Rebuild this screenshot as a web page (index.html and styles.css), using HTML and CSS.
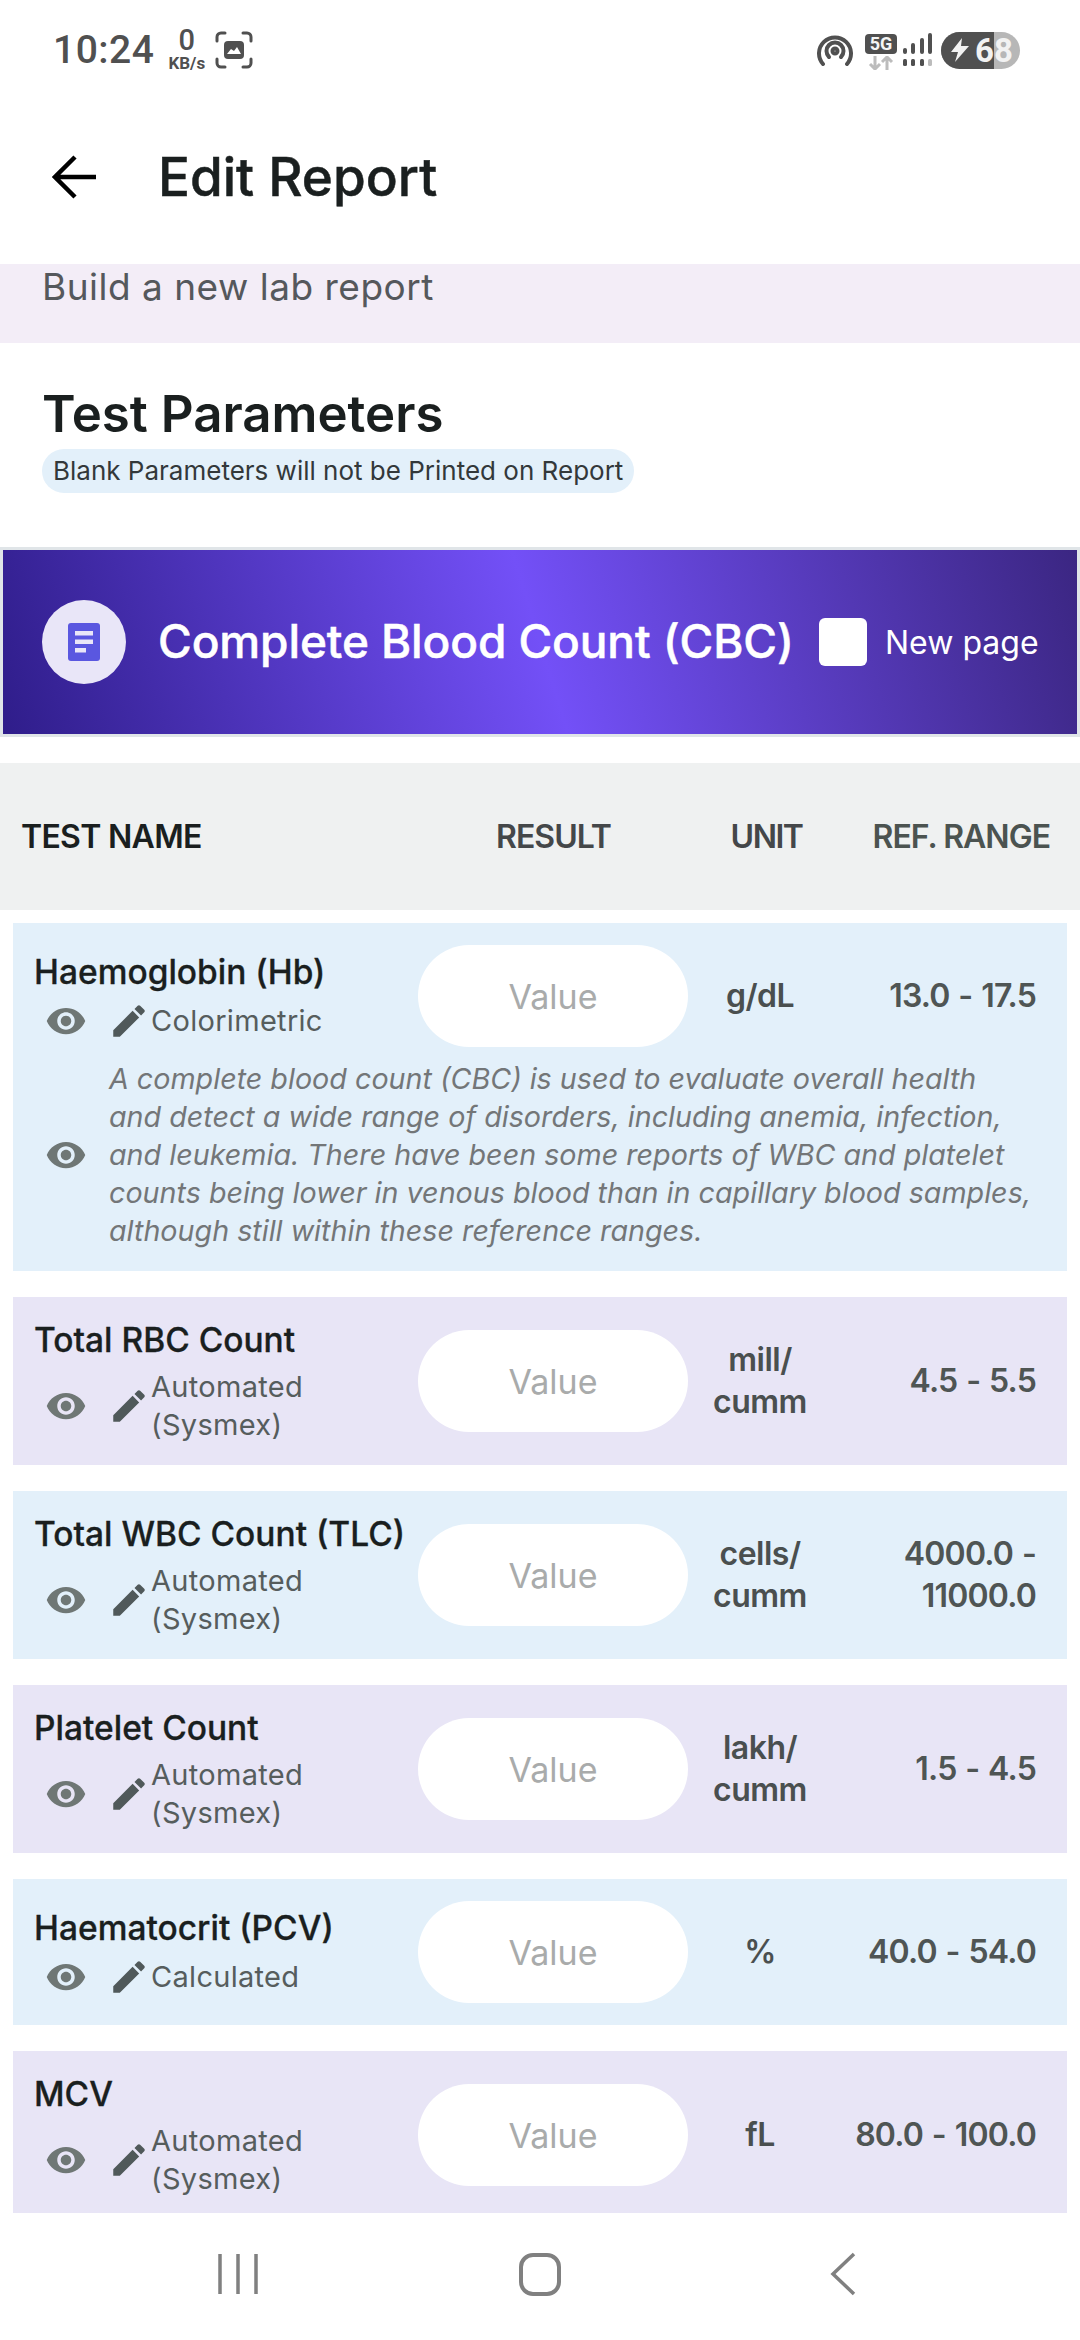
FILE: index.html
```html
<!DOCTYPE html>
<html lang="en">
<head>
<meta charset="utf-8">
<title>Edit Report</title>
<link rel="stylesheet" href="styles.css">
</head>
<body>
<svg class="defs" width="0" height="0" aria-hidden="true">
  <symbol id="eye" viewBox="0 0 24 24"><path d="M12 4.5C7 4.5 2.73 7.61 1 12c1.73 4.39 6 7.5 11 7.5s9.27-3.11 11-7.5c-1.73-4.39-6-7.5-11-7.5zM12 17c-2.76 0-5-2.24-5-5s2.24-5 5-5 5 2.24 5 5-2.24 5-5 5zm0-8c-1.66 0-3 1.34-3 3s1.34 3 3 3 3-1.34 3-3-1.34-3-3-3z"/></symbol>
  <symbol id="pen" viewBox="0 0 24 24"><path d="M3 17.25V21h3.75L17.81 9.94l-3.75-3.75L3 17.25zM20.71 7.04c.39-.39.39-1.02 0-1.41l-2.34-2.34c-.39-.39-1.02-.39-1.41 0l-1.83 1.83 3.75 3.75 1.83-1.83z"/></symbol>
</svg>
<div class="page">
  <div class="status">
    <span class="time">10:24</span>
    <span class="speed"><b>0</b><i>KB/s</i></span>
    <svg class="shot" width="38" height="38" viewBox="0 0 38 38" fill="none"><path d="M2 10V6a4 4 0 0 1 4-4h4M28 2h4a4 4 0 0 1 4 4v4M36 28v4a4 4 0 0 1-4 4h-4M10 36H6a4 4 0 0 1-4-4v-4" stroke="#505050" stroke-width="3" stroke-linecap="round"/><rect x="9" y="10" width="20" height="18" rx="4" fill="#505050"/><path d="M12 23l4-5 3 2 3-4 4 7z" fill="#fff"/></svg>
    <span class="status-gap"></span>
    <svg class="hotspot" width="36" height="32" viewBox="0 0 36 32" fill="none" stroke="#505050" stroke-width="4" stroke-linecap="round"><path d="M6 30A16 16 0 1 1 30 30"/><path d="M12 23a8.500 8.500 0 1 1 12 0"/><circle cx="18" cy="17" r="2.500"/></svg>
    <span class="net">
      <span class="fiveg">5G</span>
      <svg width="26" height="14" viewBox="0 0 26 14" fill="none" stroke="#bcbcbc" stroke-width="3"><path d="M7 0v12M2 8l5 5 5-5M19 14V2M14 6l5-5 5 5"/></svg>
    </span>
    <svg class="signal" width="30" height="34" viewBox="0 0 30 34" fill="#505050"><rect x="0" y="15" width="4" height="6" rx="2"/><rect x="8" y="10" width="4" height="11" rx="2"/><rect x="17" y="5" width="4" height="16" rx="2"/><rect x="25" y="0" width="4" height="21" rx="2"/><rect x="0" y="26" width="4" height="7" rx="1.500"/><rect x="8" y="26" width="4" height="7" rx="1.500"/><rect x="17" y="26" width="4" height="7" rx="1.500"/><rect x="25" y="26" width="4" height="7" rx="1.500" fill="#bcbcbc"/></svg>
    <span class="battery">
      <span class="battery-fill"></span>
      <svg class="bolt" width="18" height="24" viewBox="0 0 18 24"><path d="M11 0L0 14h7l-3 10L18 8h-8z" fill="#f2f2f2"/></svg>
      <span class="battery-num">68</span>
    </span>
  </div>

  <div class="appbar">
    <svg class="back" width="44" height="44" viewBox="0 0 44 44" fill="none" stroke="#000" stroke-width="4.500"><path d="M44 22H4M23 2L3 22l20 20"/></svg>
    <h1 class="app-title">Edit Report</h1>
  </div>

  <div class="strip">Build a new lab report</div>

  <div class="section">
    <h2 class="section-title">Test Parameters</h2>
    <span class="chip">Blank Parameters will not be Printed on Report</span>
  </div>

  <div class="banner">
    <span class="banner-icon">
      <svg width="32" height="38" viewBox="0 0 32 38"><rect width="32" height="38" rx="3" fill="#5a57e0"/><rect x="7" y="8" width="18" height="4.500" fill="#e9e6f8"/><rect x="7" y="16.500" width="18" height="4.500" fill="#e9e6f8"/><rect x="7" y="25" width="11" height="4.500" fill="#e9e6f8"/></svg>
    </span>
    <span class="banner-title">Complete Blood Count (CBC)</span>
    <span class="check"></span>
    <span class="banner-new">New page</span>
  </div>

  <div class="thead">
    <span class="th-name">TEST NAME</span>
    <span class="th-result">RESULT</span>
    <span class="th-unit">UNIT</span>
    <span class="th-range">REF. RANGE</span>
  </div>

  <div class="rows">
    <div class="row blue">
      <div class="cells">
        <div class="name-block">
          <div class="name">Haemoglobin (Hb)</div>
          <div class="method"><svg class="eye"><use href="#eye"/></svg><svg class="pen"><use href="#pen"/></svg><span>Colorimetric</span></div>
        </div>
        <div class="value">Value</div>
        <div class="unit">g/dL</div>
        <div class="range">13.0 - 17.5</div>
      </div>
      <div class="desc">
        <svg class="eye"><use href="#eye"/></svg>
        <p class="desc-text">A complete blood count (CBC) is used to evaluate overall health<br>and detect a wide range of disorders, including anemia, infection,<br>and leukemia. There have been some reports of WBC and platelet<br>counts being lower in venous blood than in capillary blood samples,<br>although still within these reference ranges.</p>
      </div>
    </div>

    <div class="row purple">
      <div class="cells">
        <div class="name-block">
          <div class="name">Total RBC Count</div>
          <div class="method"><svg class="eye"><use href="#eye"/></svg><svg class="pen"><use href="#pen"/></svg><span>Automated<br>(Sysmex)</span></div>
        </div>
        <div class="value">Value</div>
        <div class="unit">mill/<br>cumm</div>
        <div class="range">4.5 - 5.5</div>
      </div>
    </div>

    <div class="row blue">
      <div class="cells">
        <div class="name-block">
          <div class="name">Total WBC Count (TLC)</div>
          <div class="method"><svg class="eye"><use href="#eye"/></svg><svg class="pen"><use href="#pen"/></svg><span>Automated<br>(Sysmex)</span></div>
        </div>
        <div class="value">Value</div>
        <div class="unit">cells/<br>cumm</div>
        <div class="range">4000.0 -<br>11000.0</div>
      </div>
    </div>

    <div class="row purple">
      <div class="cells">
        <div class="name-block">
          <div class="name">Platelet Count</div>
          <div class="method"><svg class="eye"><use href="#eye"/></svg><svg class="pen"><use href="#pen"/></svg><span>Automated<br>(Sysmex)</span></div>
        </div>
        <div class="value">Value</div>
        <div class="unit">lakh/<br>cumm</div>
        <div class="range">1.5 - 4.5</div>
      </div>
    </div>

    <div class="row blue">
      <div class="cells">
        <div class="name-block">
          <div class="name">Haematocrit (PCV)</div>
          <div class="method"><svg class="eye"><use href="#eye"/></svg><svg class="pen"><use href="#pen"/></svg><span>Calculated</span></div>
        </div>
        <div class="value">Value</div>
        <div class="unit">%</div>
        <div class="range">40.0 - 54.0</div>
      </div>
    </div>

    <div class="row purple">
      <div class="cells">
        <div class="name-block">
          <div class="name">MCV</div>
          <div class="method"><svg class="eye"><use href="#eye"/></svg><svg class="pen"><use href="#pen"/></svg><span>Automated<br>(Sysmex)</span></div>
        </div>
        <div class="value">Value</div>
        <div class="unit">fL</div>
        <div class="range">80.0 - 100.0</div>
      </div>
    </div>
  </div>

  <div class="navbar">
    <svg width="40" height="42" viewBox="0 0 40 42" fill="none" stroke="#808080" stroke-width="3.500"><path d="M2 1v40M20 1v40M38 1v40"/></svg>
    <svg width="42" height="44" viewBox="0 0 42 44" fill="none" stroke="#808080" stroke-width="4"><rect x="2" y="3" width="38" height="39" rx="12"/></svg>
    <svg class="nav-back" width="28" height="44" viewBox="0 0 28 44" fill="none" stroke="#808080" stroke-width="3.500"><path d="M25 2L4 22l21 20"/></svg>
  </div>
</div>
</body>
</html>
```
FILE: styles.css
```css
* { box-sizing: border-box; }
html, body { margin: 0; padding: 0; background: #fff; }
body { font-family: "Inter", "Noto Sans", sans-serif; color: #1a1c1c; }
.defs { position: absolute; }
.page { width: 1080px; height: 2340px; overflow: hidden; display: flex; flex-direction: column; }

.status { height: 100px; flex: none; display: flex; align-items: center; padding: 0 60px 0 53px; color: #505050; }
.time { font-family: "Roboto", sans-serif; font-size: 39px; font-weight: 500; letter-spacing: .5px; }
.speed { display: flex; flex-direction: column; align-items: center; margin-left: 14px; margin-top: -2px; }
.speed b { font-family: "Roboto", sans-serif; font-size: 29px; font-weight: 500; line-height: 26px; height: 26px; }
.speed i { font-family: "Roboto", sans-serif; font-style: normal; font-size: 17px; line-height: 17px; font-weight: 700; margin-top: 2px; }
.shot { margin-left: 10px; }
.status-gap { flex: 1; }
.hotspot { margin-right: 12px; }
.net { display: flex; flex-direction: column; align-items: center; gap: 2px; margin-right: 6px; margin-top: 3px; }
.fiveg { width: 32px; height: 20px; background: #505050; border-radius: 4px; color: #f5f5f5; font: 700 18px/20px "Roboto", sans-serif; text-align: center; }
.signal { margin-right: 8px; }
.battery { position: relative; width: 79px; height: 37px; border-radius: 19px; overflow: hidden; background: #b7b7b7; display: flex; align-items: center; padding-left: 10px; gap: 6px; }
.battery-fill { position: absolute; left: 0; top: 0; bottom: 0; width: 53px; background: #505050; }
.bolt, .battery-num { position: relative; }
.battery-num { font: 700 33px/37px "Roboto", sans-serif; color: #f2f2f2; }

.appbar { height: 164px; flex: none; display: flex; align-items: center; padding: 0 0 10px 52px; }
.back { flex: none; }
.app-title { margin: 0 0 0 62px; font-size: 53px; font-weight: 500; letter-spacing: 0; color: #1a1f1f; -webkit-text-stroke: .5px #1a1f1f; }

.strip { height: 79px; flex: none; background: #f3edf7; padding-left: 42px; font-size: 37px; letter-spacing: .5px; line-height: 46px; color: #55585c; }

.section { height: 204px; flex: none; display: flex; flex-direction: column; align-items: flex-start; padding: 43px 0 0 42px; }
.section-title { margin: 0; font-size: 51px; line-height: 56px; font-weight: 600; letter-spacing: 0; color: #1a1f1f; }
.chip { margin: 7px 0 0 0; height: 44px; padding: 0 11px; border-radius: 22px; background: #e3f0fa; font-size: 26px; line-height: 44px; color: #33383a; white-space: nowrap; }

.banner { height: 190px; flex: none; display: flex; align-items: center; border: 3px solid #e0e5e8; background: linear-gradient(73deg, #2f1d8a 0%, #7350f7 50%, #3b2682 100%); color: #fff; padding-left: 39px; }
.banner-icon { width: 84px; height: 84px; border-radius: 50%; background: #e9e6f8; display: flex; align-items: center; justify-content: center; flex: none; }
.banner-title { margin: -2px 0 0 32px; font-size: 46px; font-weight: 500; letter-spacing: -.1px; -webkit-text-stroke: .5px #fff; white-space: nowrap; }
.check { width: 48px; height: 48px; border-radius: 6px; background: #fff; flex: none; position: absolute; left: 819px; }
.banner-new { position: absolute; left: 885px; font-size: 32px; }

.thead { margin-top: 26px; height: 147px; flex: none; background: #eff1f1; display: grid; grid-template-columns: 406px 270px 142px 1fr; align-items: center; padding: 0 32px 0 21px; font-size: 32px; font-weight: 600; letter-spacing: -1px; }
.th-name { color: #1a1f1f; white-space: nowrap; letter-spacing: -.7px; }
.th-result { color: #444749; text-align: center; grid-column: 2; margin-left: -17px; }
.th-unit { color: #444749; text-align: center; margin-left: -3px; letter-spacing: -1.5px; }
.th-range { color: #4b5350; text-align: right; white-space: nowrap; margin-right: -2px; }

.rows { height: 1303px; flex: none; overflow: hidden; padding: 13px 13px 0; display: flex; flex-direction: column; gap: 26px; }
.row { flex: none; padding: 22px 31px 22px 21px; }
.blue { background: #e3f0fa; }
.purple { background: #e8e5f6; }
.cells { display: grid; grid-template-columns: 384px 270px 144px 1fr; align-items: center; }
.name { font-size: 33.500px; line-height: 42px; font-weight: 500; letter-spacing: 0; color: #1a1f1f; white-space: nowrap; -webkit-text-stroke: .3px #1a1f1f; }
.method { display: flex; align-items: center; margin: 7px 0 -1px; font-size: 29px; letter-spacing: .3px; line-height: 38px; color: #565d5d; white-space: nowrap; }
.eye { width: 42px; height: 42px; margin-left: 11px; fill: #6f7775; flex: none; }
.pen { width: 42px; height: 42px; margin-left: 21px; margin-right: 1px; fill: #50595a; flex: none; }
.value { height: 102px; border-radius: 51px; background: #fff; display: flex; align-items: center; justify-content: center; font-size: 34px; color: #a9abab; }
.unit { font-size: 32px; line-height: 42px; font-weight: 600; letter-spacing: -.5px; color: #4a4f4f; text-align: center; }
.range { font-size: 32px; line-height: 42px; font-weight: 600; letter-spacing: -.8px; word-spacing: 1.500px; color: #4f5554; text-align: right; white-space: nowrap; }
.desc { display: flex; align-items: center; margin: 13px 0 -1px; }
.desc-text { margin: 0 0 0 22px; font-size: 28.700px; line-height: 38px; font-style: italic; color: #737678; white-space: nowrap; }

.navbar { flex: 1; display: flex; align-items: center; padding: 0 0 6px 218px; gap: 261px; }
.nav-back { margin-left: 7px; }
```
